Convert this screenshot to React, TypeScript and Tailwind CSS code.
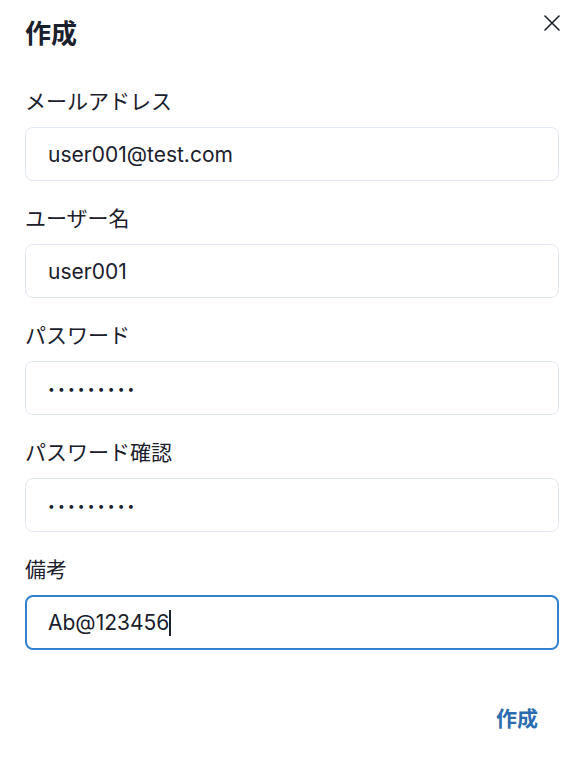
import { useState } from "react";

const font = { fontFamily: '"Inter", "Noto Sans CJK JP", sans-serif' };

function Field({ label, children }: { label: string; children: React.ReactNode }) {
  return (
    <div className="flex flex-col">
      <label className="text-[21px] leading-[31px] text-[#1a202c] mb-[10px]">{label}</label>
      {children}
    </div>
  );
}

export default function App() {
  const [email, setEmail] = useState("user001@test.com");
  const [name, setName] = useState("user001");
  const [pw, setPw] = useState("Ab@123456");
  const [pw2, setPw2] = useState("Ab@123456");

  const inputCls =
    "h-[54px] w-full rounded-[8px] border border-[#e2e8f0] bg-white px-[22px] text-[21px] text-[#1a202c] outline-none";
  const pwCls =
    "h-[54px] w-full rounded-[8px] border border-[#e2e8f0] bg-white px-[22px] text-[12px] tracking-[3.2px] text-[#1a202c] outline-none";

  return (
    <div className="w-[588px] h-[776px] bg-white pl-[25px] pr-[29px]" style={font}>
      {/* Header */}
      <div className="relative pt-[16px] h-[52px]">
        <h2 className="text-[26px] leading-[36px] font-semibold text-[#1a202c]">作成</h2>
        <button className="absolute right-[-8px] top-[8px] w-[30px] h-[30px] flex items-center justify-center text-[#1a202c]">
          <svg width="16" height="16" viewBox="0 0 16 16" fill="none" stroke="currentColor" strokeWidth="1.6" strokeLinecap="round">
            <line x1="1" y1="1" x2="15" y2="15" />
            <line x1="15" y1="1" x2="1" y2="15" />
          </svg>
        </button>
      </div>

      {/* Form */}
      <form className="flex flex-col gap-[22px] mt-[34px]">
        <Field label="メールアドレス">
          <input className={inputCls} value={email} onChange={(e) => setEmail(e.target.value)} />
        </Field>
        <Field label="ユーザー名">
          <input className={inputCls} value={name} onChange={(e) => setName(e.target.value)} />
        </Field>
        <Field label="パスワード">
          <input type="password" className={pwCls} value={pw} onChange={(e) => setPw(e.target.value)} />
        </Field>
        <Field label="パスワード確認">
          <input type="password" className={pwCls} value={pw2} onChange={(e) => setPw2(e.target.value)} />
        </Field>
        <Field label="備考">
          <div className="h-[55px] w-full rounded-[8px] border-2 border-[#3182ce] bg-white px-[21px] flex items-center text-[21px] text-[#1a202c]">
            <span>Ab@123456</span>
            <span className="w-[2px] h-[26px] bg-[#1a202c]" />
          </div>
        </Field>
      </form>

      {/* Footer */}
      <div className="flex justify-end mt-[42px]">
        <button className="h-[53px] px-[21px] text-[21px] font-semibold text-[#2b6cb0] rounded-[8px]">作成</button>
      </div>
    </div>
  );
}
